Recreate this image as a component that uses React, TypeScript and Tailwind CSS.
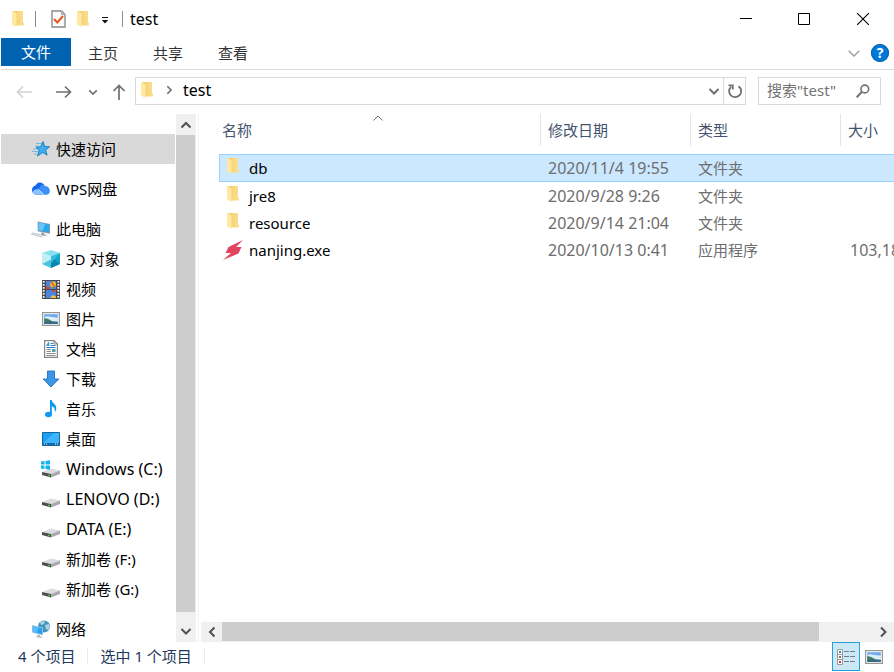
import type { ReactNode } from "react";
import clsx from "clsx";

type IconProps = { className?: string };

function FolderIcon({ className }: IconProps) {
  return (
    <svg viewBox="0 0 12 16" className={clsx("h-4 w-3 shrink-0", className)} aria-hidden>
      <defs>
        <linearGradient id="folder-body" x1="0" x2="1" y1="0" y2="0">
          <stop offset="0" stopColor="#e9c45f" />
          <stop offset=".4" stopColor="#f6d67a" />
          <stop offset="1" stopColor="#fbdf8e" />
        </linearGradient>
      </defs>
      <path d="M1 0h10v11.500l1 .5v2.500H3z" fill="url(#folder-body)" />
      <path d="M0 .5L1 0l3.500 2.500V16L0 13.500z" fill="#ffe8a2" />
    </svg>
  );
}

function CheckPageIcon() {
  return (
    <svg viewBox="0 0 15 18" className="h-[18px] w-[15px]" aria-hidden>
      <path d="M1 1h9.500L14 4.500V17H1z" fill="#fbfbfb" stroke="#8b8b8b" strokeWidth="1.400" />
      <path d="M10.500 1v3.500H14" fill="none" stroke="#a5a5a5" />
      <path d="M3 9l3.300 3.500L12 6" fill="none" stroke="#e8551f" strokeWidth="2" />
    </svg>
  );
}

function StarIcon() {
  return (
    <svg viewBox="0 0 18 18" className="size-[18px]" aria-hidden>
      <path d="M4 3.500h6M3 6h4M1 9h5M0 11.500h6M2 14h3" stroke="#6fb2e0" strokeWidth=".9" />
      <path
        d="M11 1.500l1.700 5 5 .2-4 3.400 1.400 5L10.600 12.500 5.500 16l1.700-5.700L4 7.300l4.600-.5z"
        fill="#3aaef0"
        stroke="#1579bd"
        strokeWidth=".9"
      />
    </svg>
  );
}

function CloudIcon() {
  return (
    <svg viewBox="0 0 18 18" className="size-[18px]" aria-hidden>
      <path d="M4.500 14.800A4.600 4.600 0 0 1 0 10C0 7.500 1.500 6 3.500 5.500A5 5 0 0 1 12 4.500l2 5-5 5z" fill="#1468ee" />
      <path d="M12 4.500A5 5 0 0 0 7.500 7.500L5 14.500h7.500z" fill="#3c8df8" />
      <path d="M8 9.500c3-4.500 7-4.300 9-1.200 2 3.200.3 6.500-2.800 6.500H5z" fill="#3f8ff9" />
      <path d="M.5 12c1.500-3 4-3.200 5.500-2L12 14.800H4.500c-2 0-3.500-1-4-2.800z" fill="#8ac1ff" />
      <path d="M5.500 8.800l6.500 6" stroke="#e2f0ff" strokeWidth=".9" />
    </svg>
  );
}

function ComputerIcon() {
  return (
    <svg viewBox="0 0 19 18" className="size-[18px] overflow-visible" aria-hidden>
      <path d="M6 1l13 2.800v10.200L6 11.300z" fill="#7f98aa" />
      <path d="M7 2.200l11 2.400v8L7 10.300z" fill="#2ba6ef" />
      <path d="M7 2.200l7 1.500-3 7.400-4-.8z" fill="#64c6fa" />
      <path d="M10 12.300l3 .5v1.700l3 .8-3 1-4-1z" fill="#9daab4" />
      <path d="M0 13.200l8.500 1.600-3 1.700L-.5 14.600z" fill="#d7dde1" stroke="#a9b4bc" strokeWidth=".6" />
      <path d="M8 16l3 .5-1.500 1.200-3-.6z" fill="#b6bfc5" />
    </svg>
  );
}

function CubeIcon() {
  return (
    <svg viewBox="0 0 18 18" className="size-[18px]" aria-hidden>
      <path d="M0 3l9-3 9 3-9 3.500z" fill="#8ae2ee" />
      <path d="M0 3l9 3.500V18l-9-4z" fill="#c5eff4" />
      <path d="M18 3L9 6.500V18l9-4z" fill="#16a3c9" />
      <path d="M0 14l9-4.500V18z" fill="#47c6d9" />
      <path d="M9 6.500V18l9-4z" fill="#0c86ae" />
      <path d="M9 6.500L18 3 9 13z" fill="#33bcdc" />
    </svg>
  );
}

function VideoIcon() {
  return (
    <svg viewBox="0 0 18 19" className="h-[19px] w-[18px]" aria-hidden>
      <path d="M0 0h18v19H0z" fill="#4a4a4a" />
      <path d="M1.700 1v17M16.300 1v17" stroke="#f2f2f2" strokeWidth="1.800" strokeDasharray="1.800 1.200" />
      <path d="M4 1h10v8H4z" fill="#4a86e0" />
      <path d="M4 10h10v8H4z" fill="#4a86e0" />
      <circle cx="11" cy="4.500" r="3" fill="#f0b429" />
      <path d="M9.500 2l3 5" stroke="#d9413f" strokeWidth="1.200" />
      <path d="M4 6.500l3.500.5v2H4zM9.500 10h4l-1.500 3z" fill="#d9413f" />
      <path d="M9.500 7h3l-1.500 2z" fill="#55a04b" />
      <path d="M8 18l2.500-3 3.500 1.500V18z" fill="#edc33b" />
    </svg>
  );
}

function PictureIcon() {
  return (
    <svg viewBox="0 0 18 14" className="h-3.5 w-[18px]" aria-hidden>
      <path d="M.6.600h16.800v12.800H.6z" fill="#fff" stroke="#969696" strokeWidth="1.200" />
      <path d="M2.200 2.200h13.600v9.600H2.200z" fill="#6ea9ee" />
      <path d="M2.200 5.500c2-1.500 4-1.700 6-.8l7.600 1V9.500H2.200z" fill="#dceef8" />
      <path d="M2.200 6c3 .3 5 1.500 8 3.300l5.600.7v1.800H2.200z" fill="#3f7a66" />
      <path d="M2.200 10l13.600.3v1.500H2.200z" fill="#34668a" />
    </svg>
  );
}

function DocumentIcon() {
  return (
    <svg viewBox="0 0 14 18" className="mx-0.5 h-[18px] w-3.5" aria-hidden>
      <path d="M.6.600H10l3.400 3.400v13.400H.6z" fill="#fff" stroke="#858585" strokeWidth="1.200" />
      <path d="M10 .6V4h3.400" fill="none" stroke="#858585" />
      <path d="M2.500 6L4.500 2.500 5 6M3.200 5h1.800M6.500 3.500H9M6.500 5.500h5M2.500 7.500h9" fill="none" stroke="#2083c5" />
      <path d="M2.500 9.500H7M2.500 11.500H7M2.500 13.500h9M2.500 15.500h9" stroke="#8d8d8d" />
      <path d="M8 9h3.500v3H8z" fill="#4f9faf" />
    </svg>
  );
}

function DownloadIcon() {
  return (
    <svg viewBox="0 0 18 18" className="size-[18px]" aria-hidden>
      <path d="M5.500 1h7v8h4.300L9 17 1.200 9h4.300z" fill="#3b96e6" stroke="#2374c3" strokeWidth=".9" />
    </svg>
  );
}

function MusicIcon() {
  return (
    <svg viewBox="0 0 18 18" className="size-[18px]" aria-hidden>
      <ellipse cx="6.500" cy="14.500" rx="3.500" ry="2.700" fill="#0c9af2" />
      <path d="M8 0h1.700c.3 3 4.600 4 4.600 8 0 1.600-.5 3-1.500 4 .4-3-.8-5-3-5.700V14.500H8z" fill="#0c9af2" />
    </svg>
  );
}

function DesktopIcon() {
  return (
    <svg viewBox="0 0 18 14" className="h-3.5 w-[18px]" aria-hidden>
      <path d="M.5.500h17v13H.5z" fill="#1da0f4" stroke="#1466a3" />
      <path d="M1 11L12 1h5v10z" fill="#3fb3fb" />
      <path d="M1 12h16" stroke="#0b5c9a" strokeWidth="1.500" />
      <path d="M2 12h1M4 12h1M13 12h1M15 12h1" stroke="#fff" />
    </svg>
  );
}

function DriveIcon({ system = false }: { system?: boolean }) {
  return (
    <svg viewBox="0 0 18 18" className="size-[18px] overflow-visible" aria-hidden>
      <path d="M0 12l9-3.500L18 10.500 9 14z" fill="#dcdde0" />
      <path d="M0 12l9 2v3.500L0 15z" fill="#4c4e50" />
      <path d="M9 14l9-3.500V14l-9 3.500z" fill="#a9aaad" />
      <path d="M6 14.800h1.800v1.400H6z" fill="#45d04b" />
      {system && (
        <path
          d="M-1 1.500l3.500-.5v3.500H-1zM3.500.900L8 .2v4.300H3.500zM-1 5.500h3.500V9L-1 8.500zM3.500 5.500H8v4.300L3.500 9.100z"
          fill="#14b3f0"
        />
      )}
    </svg>
  );
}

function NetworkIcon() {
  return (
    <svg viewBox="0 0 18 18" className="size-[18px]" aria-hidden>
      <circle cx="12" cy="6.500" r="6" fill="#4794bb" />
      <path d="M8 2.500c2-1.500 4-1.500 5-1l-1 2.500-3 1zM13 5l4-1c1 2 .6 4-.5 6L14 9z" fill="#a7d6e3" />
      <path d="M0 5l11 2.500v8L0 12.500z" fill="#a5cde6" />
      <path d="M.8 6l9.400 2.200v6L.8 11.900z" fill="#23a0ee" />
      <path d="M.8 6l6 1.400-2 5.400-4-.9z" fill="#57bdf8" />
      <path d="M6 14.500l2 .5v1.200l3 .8-2.500 1L4 17z" fill="#b5bdc3" />
    </svg>
  );
}

function BoltIcon() {
  return (
    <svg viewBox="0 0 20 20" className="size-5 shrink-0" aria-hidden>
      <path d="M20 0L5.500 7 2.500 13H8L0 20l15.500-6.500L18.500 7H13z" fill="#e2445f" />
    </svg>
  );
}

function DetailsIcon() {
  return (
    <svg viewBox="0 0 18 16" className="h-4 w-[18px]" aria-hidden>
      <path d="M.5.500h5v15h-5zM.5 5.500h5M.5 10.500h5" fill="#fff" stroke="#9a9a9a" />
      <path d="M2 2h2v2H2z" fill="#3f8087" />
      <path d="M2 7h2v2H2z" fill="#7a7c4f" />
      <path d="M2 12h2v2H2z" fill="#c3391d" />
      <path d="M7 2.500h5M13 2.500h5M7 7.500h5M13 7.500h5M7 12.500h5M13 12.500h5" stroke="#7b7b84" />
    </svg>
  );
}

type Direction = "up" | "down" | "left" | "right";

const CHEVRON: Record<Direction, string> = {
  up: "M1.500 8.500L6 4l4.500 4.500",
  down: "M1.500 4L6 8.500 10.500 4",
  left: "M8.500 1.500L4 6l4.500 4.500",
  right: "M4 1.500L8.500 6 4 10.500",
};

function Chevron({ dir, className, weight = 2 }: { dir: Direction; className?: string; weight?: number }) {
  return (
    <svg viewBox="0 0 12 12" className={clsx("shrink-0", className ?? "size-3 text-[#505050]")} aria-hidden>
      <path d={CHEVRON[dir]} fill="none" stroke="currentColor" strokeWidth={weight} />
    </svg>
  );
}

function Arrow({ d }: { d: string }) {
  return (
    <svg viewBox="0 0 16 16" className="size-4" aria-hidden>
      <path d={d} fill="none" stroke="currentColor" strokeWidth="1.700" />
    </svg>
  );
}

type NavItem = { label: string; icon: ReactNode; child?: boolean; active?: boolean; latin?: boolean };

const NAV_GROUPS: NavItem[][] = [
  [{ label: "快速访问", icon: <StarIcon />, active: true }],
  [{ label: "WPS网盘", icon: <CloudIcon /> }],
  [
    { label: "此电脑", icon: <ComputerIcon /> },
    { label: "3D 对象", icon: <CubeIcon />, child: true },
    { label: "视频", icon: <VideoIcon />, child: true },
    { label: "图片", icon: <PictureIcon />, child: true },
    { label: "文档", icon: <DocumentIcon />, child: true },
    { label: "下载", icon: <DownloadIcon />, child: true },
    { label: "音乐", icon: <MusicIcon />, child: true },
    { label: "桌面", icon: <DesktopIcon />, child: true },
    { label: "Windows (C:)", icon: <DriveIcon system />, child: true, latin: true },
    { label: "LENOVO (D:)", icon: <DriveIcon />, child: true, latin: true },
    { label: "DATA (E:)", icon: <DriveIcon />, child: true, latin: true },
    { label: "新加卷 (F:)", icon: <DriveIcon />, child: true },
    { label: "新加卷 (G:)", icon: <DriveIcon />, child: true },
  ],
  [{ label: "网络", icon: <NetworkIcon /> }],
];

type FileRow = { name: string; date: string; kind: string; size?: string; selected?: boolean };

const FILES: FileRow[] = [
  { name: "db", date: "2020/11/4 19:55", kind: "文件夹", selected: true },
  { name: "jre8", date: "2020/9/28 9:26", kind: "文件夹" },
  { name: "resource", date: "2020/9/14 21:04", kind: "文件夹" },
  { name: "nanjing.exe", date: "2020/10/13 0:41", kind: "应用程序", size: "103,18" },
];

function TitleBar() {
  return (
    <header className="flex h-[38px] items-center">
      <FolderIcon className="ml-[11px]" />
      <span className="ml-[11px] h-4 w-px bg-[#8c8c8c]" />
      <button type="button" className="ml-[15px]" aria-label="属性">
        <CheckPageIcon />
      </button>
      <button type="button" className="ml-[11px]" aria-label="新建文件夹">
        <FolderIcon />
      </button>
      <button type="button" className="ml-3 pt-1" aria-label="自定义快速访问工具栏">
        <svg viewBox="0 0 8 8" className="size-2" aria-hidden>
          <path d="M1 .500h6" stroke="#111" />
          <path d="M.8 3h6.400L4 6.500z" fill="#111" />
        </svg>
      </button>
      <span className="ml-[13px] h-4 w-px bg-[#8c8c8c]" />
      <h1 className="ml-[7px] text-base leading-5">test</h1>
      <div className="ml-auto flex pr-px">
        <button type="button" className="grid h-[38px] w-[58px] place-items-center" aria-label="最小化">
          <svg viewBox="0 0 12 12" className="size-3" aria-hidden>
            <path d="M0 5.500h12" stroke="#000" />
          </svg>
        </button>
        <button type="button" className="grid h-[38px] w-[58px] place-items-center" aria-label="最大化">
          <svg viewBox="0 0 12 12" className="size-3" aria-hidden>
            <path d="M.5.500h11v11H.5z" fill="none" stroke="#000" />
          </svg>
        </button>
        <button type="button" className="grid h-[38px] w-[60px] place-items-center" aria-label="关闭">
          <svg viewBox="0 0 12 12" className="size-3" aria-hidden>
            <path d="M0 0l12 12M12 0L0 12" stroke="#000" strokeWidth="1.100" />
          </svg>
        </button>
      </div>
    </header>
  );
}

function RibbonTabs() {
  return (
    <nav className="flex h-8 items-start border-b border-[#dadbdc]">
      <button type="button" className="h-7 w-[70px] bg-[#0063b1] text-white">
        文件
      </button>
      {["主页", "共享", "查看"].map((tab) => (
        <button key={tab} type="button" className="h-[30px] w-[65px] pr-px text-[#333]">
          {tab}
        </button>
      ))}
      <div className="ml-auto flex h-[30px] items-center gap-2.5 pr-[5px]">
        <button type="button" aria-label="展开功能区">
          <Chevron dir="down" className="size-3.5 text-[#9b9b9b]" weight={1.2} />
        </button>
        <button
          type="button"
          className="grid size-[18px] place-items-center rounded-full bg-[#0078d7] text-[14px] leading-none font-bold text-white ring-1 ring-[#0a5fae] ring-inset"
          aria-label="帮助"
        >
          ?
        </button>
      </div>
    </nav>
  );
}

function AddressBar() {
  return (
    <div className="flex h-11 items-start pt-[7px] pr-[13px] text-[#707070]">
      <div className="flex h-[30px] items-center">
        <button type="button" className="ml-[15px] text-[#d2d2d2]" aria-label="后退">
          <Arrow d="M16 8H1.500M7 2.500L1.500 8 7 13.500" />
        </button>
        <button type="button" className="ml-6" aria-label="前进">
          <Arrow d="M0 8h14.500M9 2.500L14.500 8 9 13.500" />
        </button>
        <button type="button" className="ml-4" aria-label="最近浏览的位置">
          <Chevron dir="down" className="size-2.5" />
        </button>
        <button type="button" className="ml-[13px]" aria-label="上移">
          <Arrow d="M8 16V1.500M2.500 7L8 1.500 13.500 7" />
        </button>
      </div>
      <div className="ml-2 flex h-7 min-w-0 flex-1 border border-[#d9d9d9]">
        <div className="flex flex-1 items-center pb-0.5">
          <FolderIcon className="ml-[5px]" />
          <Chevron dir="right" className="ml-[11px] size-2.5" />
          <a href="#test" className="ml-[9px] text-base leading-5 text-black">
            test
          </a>
        </div>
        <button type="button" className="px-[3px]" aria-label="以前的位置">
          <Chevron dir="down" className="size-3" />
        </button>
        <button type="button" className="grid w-[22px] place-items-center border-l border-[#d9d9d9]" aria-label="刷新">
          <svg viewBox="0 0 16 16" className="size-4" aria-hidden>
            <path d="M11.500 3.200A6 6 0 1 1 4 3.800M1.500 2.300h4.300v4.300" fill="none" stroke="currentColor" strokeWidth="1.800" />
          </svg>
        </button>
      </div>
      <label className="ml-3 flex h-7 w-[123px] items-center border border-[#d9d9d9] pr-2.5 pl-2">
        <input
          type="text"
          aria-label="搜索"
          placeholder={'搜索"test"'}
          className="min-w-0 flex-1 pb-0.5 outline-none placeholder:text-[#737373]"
        />
        <svg viewBox="0 0 14 14" className="size-3.5 shrink-0" aria-hidden>
          <circle cx="8.800" cy="5" r="3.900" fill="none" stroke="currentColor" strokeWidth="1.600" />
          <path d="M6 7.800L.7 13.200" stroke="currentColor" strokeWidth="2" />
        </svg>
      </label>
    </div>
  );
}

function Sidebar() {
  return (
    <nav className="-mb-0.5 flex w-[175px] shrink-0 flex-col gap-2.5 pt-5" aria-label="导航窗格">
      {NAV_GROUPS.map((group) => (
        <ul key={group[0].label}>
          {group.map((item) => (
            <li key={item.label}>
              <a
                href={`#${item.label}`}
                className={clsx(
                  "mr-px flex h-[30px] items-center gap-1.5 whitespace-nowrap text-black",
                  item.child ? "pl-[41px]" : "pl-[31px]",
                  item.active && "bg-[#d9d9d9]",
                  item.latin && "text-base leading-5",
                )}
              >
                <span className="flex w-[18px] shrink-0 justify-center">{item.icon}</span>
                {item.label}
              </a>
            </li>
          ))}
        </ul>
      ))}
    </nav>
  );
}

function VerticalScrollbar() {
  return (
    <div className="flex w-5 shrink-0 flex-col bg-[#f0f0f0]">
      <button type="button" className="grid h-[21px] place-items-center" aria-label="向上滚动">
        <Chevron dir="up" />
      </button>
      <div className="mr-px flex-1 bg-[#cdcdcd]" />
      <button type="button" className="mt-2 grid h-[22px] place-items-center" aria-label="向下滚动">
        <Chevron dir="down" />
      </button>
    </div>
  );
}

function HorizontalScrollbar() {
  return (
    <div className="ml-0.5 flex h-5 bg-[#f0f0f0]">
      <button type="button" className="grid w-[21px] place-items-center" aria-label="向左滚动">
        <Chevron dir="left" />
      </button>
      <div className="mb-px flex-1 bg-[#cdcdcd]" />
      <button type="button" className="ml-[53px] grid w-[22px] place-items-center" aria-label="向右滚动">
        <Chevron dir="right" />
      </button>
    </div>
  );
}

function FileTable() {
  return (
    <table className="w-full table-fixed border-separate border-spacing-0 text-left whitespace-nowrap">
      <thead className="text-[#44546f]">
        <tr className="h-8">
          <th scope="col" className="relative border-r border-[#e5e5e5] p-0 pl-[3px] font-normal" aria-sort="ascending">
            名称
            <Chevron dir="up" className="absolute -top-0.5 left-1/2 size-3 -translate-x-2 text-[#6b6b6b]" weight={1} />
          </th>
          <th scope="col" className="w-[150px] border-r border-[#e5e5e5] p-0 pl-[7px] font-normal">
            修改日期
          </th>
          <th scope="col" className="w-[150px] border-r border-[#e5e5e5] p-0 pl-[7px] font-normal">
            类型
          </th>
          <th scope="col" className="w-[53px] p-0 pl-[7px] font-normal">
            大小
          </th>
        </tr>
      </thead>
      <tbody className="text-[#6d6d6d] before:block before:h-2 before:content-['']">
        {FILES.map((file) => {
          const cell = file.selected ? "border-y border-[#99d1ff] bg-[#cce8ff]" : "";
          return (
            <tr key={file.name} className={file.selected ? "h-7" : "h-[27px]"} aria-selected={file.selected ?? false}>
              <td className={clsx("p-0 text-black", cell, file.selected ? "border-l" : "pl-px")}>
                <span className="flex items-center gap-1.5">
                  <span className="ml-[3px] flex w-5 shrink-0 justify-center">
                    {file.size ? <BoltIcon /> : <FolderIcon className="mb-1" />}
                  </span>
                  {file.name}
                </span>
              </td>
              <td className={clsx("p-0 pl-[7px] text-base leading-5", cell)}>{file.date}</td>
              <td className={clsx("p-0 pl-[7px]", cell)}>{file.kind}</td>
              <td className={clsx("overflow-hidden p-0 pl-[9px] text-base leading-5", cell)}>{file.size}</td>
            </tr>
          );
        })}
      </tbody>
    </table>
  );
}

function StatusBar() {
  return (
    <footer className="flex h-[30px] items-start text-[#1e395b]">
      <div className="flex h-7 items-center">
        <span className="ml-[17px]">4 个项目</span>
        <span className="mx-3 h-4 w-px bg-[#ececec]" />
        <span>选中 1 个项目</span>
        <span className="ml-3 h-4 w-px bg-[#ececec]" />
      </div>
      <div className="ml-auto flex pr-1.5">
        <button
          type="button"
          className="grid h-[29px] w-7 place-items-center border border-[#26a0da] bg-[#cbe8f6]"
          aria-label="详细信息"
          aria-pressed="true"
        >
          <DetailsIcon />
        </button>
        <button type="button" className="grid h-[29px] w-7 place-items-center" aria-label="大缩略图" aria-pressed="false">
          <PictureIcon />
        </button>
      </div>
    </footer>
  );
}

export default function App() {
  return (
    <div className="flex min-h-screen flex-col bg-white pl-px font-['Noto_Sans','Noto_Sans_CJK_SC',sans-serif] text-[15px] leading-5 text-black">
      <TitleBar />
      <RibbonTabs />
      <AddressBar />
      <div className="flex flex-1">
        <Sidebar />
        <VerticalScrollbar />
        <main className="ml-0.5 flex min-w-0 flex-1 flex-col border-l border-[#f3f3f3]">
          <div className="flex-1 overflow-hidden pl-5">
            <FileTable />
          </div>
          <HorizontalScrollbar />
        </main>
      </div>
      <StatusBar />
    </div>
  );
}
